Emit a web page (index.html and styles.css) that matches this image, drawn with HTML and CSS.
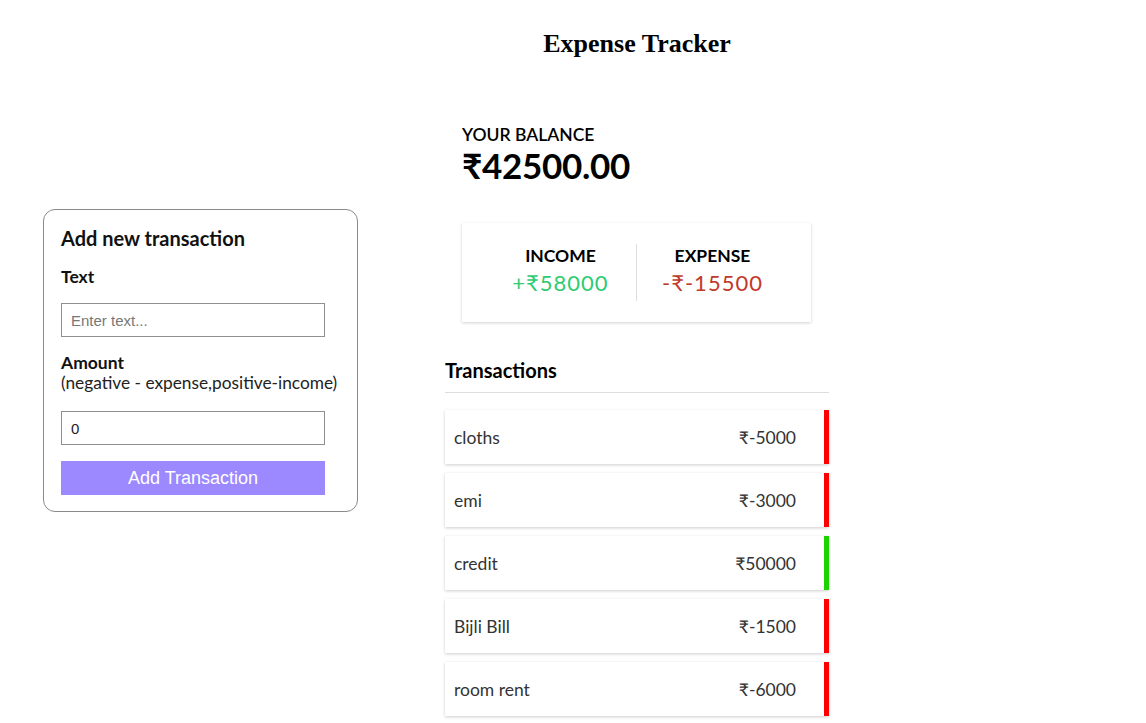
FILE: index.html
```html
<!DOCTYPE html>
<html>
<head>
<meta charset="utf-8">
<link rel="stylesheet" href="styles.css">
</head>
<body>
<div class="page">
  <aside class="form-card">
    <h3 class="form-title">Add new transaction</h3>
    <form class="form">
      <label class="label">Text</label>
      <input class="input input-text" type="text" placeholder="Enter text...">
      <label class="label label-amount">Amount<span class="hint">(negative - expense,positive-income)</span></label>
      <input class="input input-amount" type="text" value="0">
      <button class="btn" type="button">Add Transaction</button>
    </form>
  </aside>
  <main class="main">
    <h2 class="title">Expense Tracker</h2>
    <div class="balance">
      <div class="balance-label">YOUR BALANCE</div>
      <div class="balance-value">₹42500.00</div>
    </div>
    <div class="inc-exp">
      <div class="ie-col">
        <div class="ie-label">INCOME</div>
        <div class="ie-value plus">+₹58000</div>
      </div>
      <div class="ie-col">
        <div class="ie-label">EXPENSE</div>
        <div class="ie-value minus">-₹-15500</div>
      </div>
    </div>
    <h3 class="tx-title">Transactions</h3>
    <ul class="list">
      <li class="item neg"><span>cloths</span><span>₹-5000</span></li>
      <li class="item neg"><span>emi</span><span>₹-3000</span></li>
      <li class="item pos"><span>credit</span><span>₹50000</span></li>
      <li class="item neg"><span>Bijli Bill</span><span>₹-1500</span></li>
      <li class="item neg"><span>room rent</span><span>₹-6000</span></li>
    </ul>
  </main>
</div>
</body>
</html>
```
FILE: styles.css
```css
* { box-sizing: border-box; }
html, body { margin: 0; padding: 0; background: #fff; }
body { font-family: Lato, "Noto Sans", sans-serif; color: #000; }
.page { display: flex; align-items: flex-start; }
.form-card {
  margin: 209px 0 0 43px;
  width: 315px;
  height: 303px;
  border: 1px solid #8a8a8a;
  border-radius: 12px;
  padding: 15px 17px;
}
.form-title { margin: 0; font-size: 20px; font-weight: 700; color: #111; line-height: 26px; }
.form { display: flex; flex-direction: column; }
.label { font-weight: 700; font-size: 17.5px; margin-top: 16px; line-height: 20px; color: #111; }
.label-amount { margin-top: 16px; }
.hint { display: block; font-weight: 400; line-height: 20px; color: #222; white-space: nowrap; font-size: 17.3px; }
.input {
  width: 264px;
  height: 34px;
  border: 1px solid #8f8f8f;
  padding: 0 9px;
  font-family: "Liberation Sans", Arial, sans-serif;
  font-size: 15px;
  color: #222;
}
.input-text { margin-top: 16px; }
.input-amount { margin-top: 18px; height: 34px; }
.input::placeholder { color: #777; }
.btn {
  margin-top: 16px;
  width: 264px;
  height: 34px;
  border: 0;
  background: #9c88ff;
  color: #fff;
  font-family: "Liberation Sans", Arial, sans-serif;
  font-size: 18px;
}
.main { margin-left: 87px; width: 384px; }
.title {
  font-family: "Liberation Serif", "Times New Roman", serif;
  font-size: 26px;
  font-weight: 700;
  text-align: center;
  margin: 29px 0 0;
  line-height: 30px;
}
.balance { margin: 66px 0 0 17px; }
.balance-label { font-size: 17.5px; font-weight: 600; line-height: 20px; }
.balance-value { font-size: 35px; font-weight: 700; line-height: 40px; letter-spacing: -0.3px; }
.inc-exp {
  margin: 38px 0 0 17px;
  width: 349px;
  height: 99px;
  background: #fff;
  box-shadow: 0 1px 3px rgba(0,0,0,0.18);
  display: flex;
  align-items: flex-start;
  padding: 21px 23px 0;
}
.ie-col { flex: 1; text-align: center; padding-bottom: 3.5px; }
.ie-col:first-child { border-right: 1px solid #ddd; }
.ie-label { font-size: 17.5px; font-weight: 700; line-height: 23.5px; }
.ie-value { font-size: 22px; letter-spacing: 1px; line-height: 30px; }
.plus { color: #2ecc71; }
.minus { color: #c0392b; }
.tx-title {
  margin: 36px 0 0;
  font-size: 20px;
  font-weight: 700;
  line-height: 24px;
  padding-bottom: 10px;
  border-bottom: 1px solid #ddd;
}
.list { list-style: none; margin: 17px 0 0; padding: 0; }
.item {
  display: flex;
  justify-content: space-between;
  align-items: center;
  height: 54px;
  margin-bottom: 9px;
  padding: 0 28px 0 9px;
  background: #fff;
  box-shadow: 0 1px 3px rgba(0,0,0,0.2);
  border-right: 5px solid #f00;
  font-size: 17.5px;
  color: #333;
}
.item.pos { border-right-color: #1cd300; }
.item.neg { border-right-color: #f00; }
```
